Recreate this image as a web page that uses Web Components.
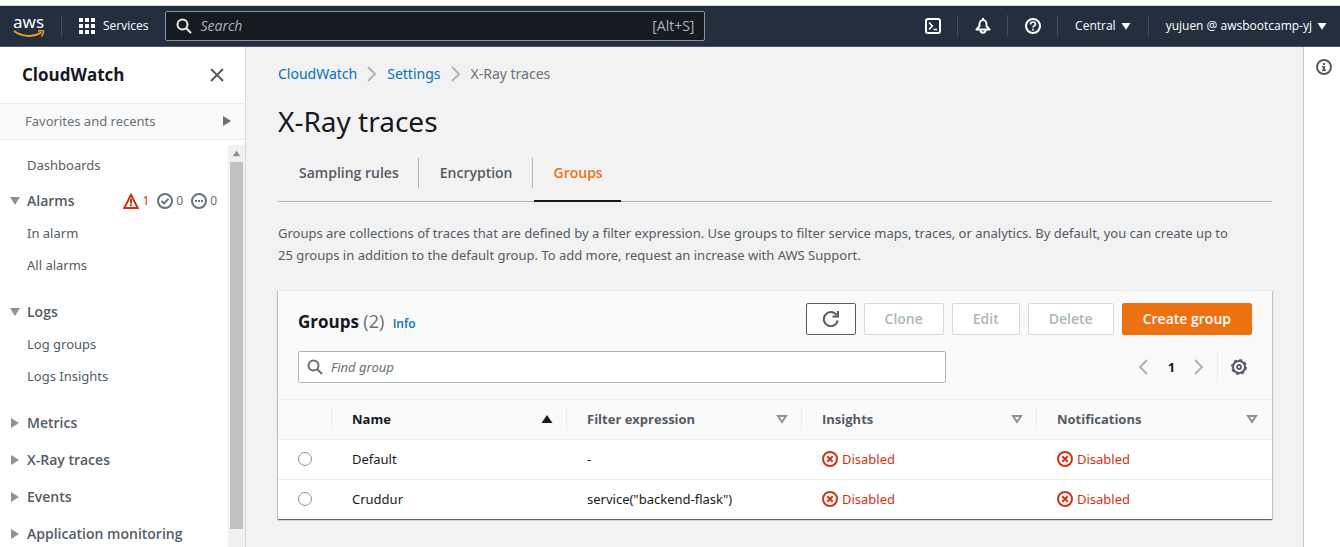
<!DOCTYPE html>
<html lang="en">
<head>
<meta charset="utf-8">
<title>CloudWatch - X-Ray traces</title>
<style>
  :root {
    --body: "Noto Sans", "Open Sans", sans-serif;
    --strong: "Open Sans", "Noto Sans", sans-serif;
    --ink: #16191f;
    --grey: #545b64;
    --soft: #687078;
    --line: #eaeded;
    --edge: #aab7b8;
    --link: #0073bb;
    --orange: #ec7211;
    --red: #d13212;
  }
  html, body { height: 100%; }
  body { margin: 0; overflow: hidden; font: 13px/22px var(--body); color: var(--grey); }
</style>
</head>
<body>
<cw-app>
  <cw-topbar slot="top"></cw-topbar>
  <cw-sidebar slot="nav"></cw-sidebar>
  <cw-breadcrumbs>
    <cw-crumb href="#cloudwatch">CloudWatch</cw-crumb>
    <cw-crumb href="#settings">Settings</cw-crumb>
    <cw-crumb>X-Ray traces</cw-crumb>
  </cw-breadcrumbs>
  <cw-heading>X-Ray traces</cw-heading>
  <cw-tabs></cw-tabs>
  <cw-text>Groups are collections of traces that are defined by a filter expression. Use groups to filter service maps, traces, or analytics. By default, you can create up to<br>25 groups in addition to the default group. To add more, request an increase with AWS Support.</cw-text>
  <cw-groups></cw-groups>
  <cw-tools slot="tools"></cw-tools>
</cw-app>
<script>
const S = 'fill="none" stroke="currentColor" stroke-width="2"';
const thin = w => `fill="none" stroke="currentColor" stroke-width="${w}"`;
const ICONS = {
  search: `<circle cx="6.5" cy="6.5" r="5" ${S}/><path d="M10.3 10.3 15 15" ${S}/>`,
  grid: [0, 6, 12].map(y => [0, 6, 12].map(x => `<rect x="${x}" y="${y}" width="4" height="4" fill="currentColor"/>`).join('')).join(''),
  shell: `<rect x="1" y="1" width="14" height="14" rx="2" ${S}/><path d="M4 4.5 7.3 8 4 11.5M8.5 11.5H12" ${thin(1.6)}/>`,
  bell: `<path d="M1.5 11.5h13L11.500 8V6.200C11.500 4 10 2 8 2S4.500 4 4.500 6.200V8z" ${S} stroke-linejoin="round"/><path d="M8 0v2M5.500 12c0 1.800 1 2.800 2.500 2.800s2.500-1 2.500-2.800" ${S}/>`,
  help: `<circle cx="8" cy="8" r="7" ${S}/><path d="M5.600 6.400C5.600 4.900 6.600 4 8 4s2.400.9 2.400 2.200C10.400 7.800 8 7.800 8 9.600M8 10.700v1.800" ${thin(1.7)}/>`,
  info: `<circle cx="8" cy="8" r="7" ${S}/><path d="M7 4h2v2H7zM6 7h3v3.500h1V12H6v-1.500h1v-2H6z" fill="currentColor"/>`,
  close: `<path d="M2 2l12 12M14 2 2 14" ${S}/>`,
  right: `<path d="M4 3v10L12 8z" fill="currentColor"/>`,
  down: `<path d="M3 4h10L8 12z" fill="currentColor"/>`,
  caret: `<path d="M2 4h12L8 13z" fill="currentColor"/>`,
  up: `<path d="M8 4 13.500 12h-11z" fill="currentColor"/>`,
  sort: `<path d="M4 5h8L8 11z" ${S}/>`,
  next: `<path d="M4 1l7 7-7 7" ${S}/>`,
  prev: `<path d="M11 1 4 8l7 7" ${S}/>`,
  alarm: `<path d="M8 1.800 14.800 15H1.200z" ${S}/><path d="M8 6v4.500M8 11.300v2" ${S}/>`,
  ok: `<circle cx="8" cy="8" r="7" ${S}/><path d="M4.500 8 7 10.400l4.500-4.500" ${S}/>`,
  pending: `<circle cx="8" cy="8" r="7" ${S}/><path d="M4 8h2M7 8h2M10 8h2" ${S}/>`,
  off: `<circle cx="8" cy="8" r="7" ${S}/><path d="M5.300 5.300l5.400 5.400M10.700 5.300l-5.400 5.400" ${S}/>`,
  refresh: `<path d="M14.700 9.500A7 7 0 1 1 13.500 4" ${S}/><path d="M15 0v5.500H9.500" ${S}/>`,
  gear: `<circle cx="8" cy="8" r="6" ${S}/><circle cx="8" cy="8" r="7.300" fill="none" stroke="currentColor" stroke-width="1.400" stroke-dasharray="3.230 2.500"/><circle cx="8" cy="8" r="2" ${thin(1.8)}/>`
};

const define = (name, css, html) => customElements.define(name, class extends HTMLElement {
  constructor() {
    super();
    const body = typeof html === 'function' ? html(this) : html;
    this.attachShadow({ mode: 'open' }).innerHTML =
      `<style>*{box-sizing:border-box}button,input{font:inherit;color:inherit;margin:0}button{background:none;border:0;padding:0;cursor:pointer}a{text-decoration:none}${css}</style>${body}`;
  }
});

define('cw-icon', `:host{display:inline-flex;flex:none;width:16px;height:16px}svg{display:block;width:100%;height:100%}`,
  el => `<svg viewBox="0 0 16 16" aria-hidden="true">${ICONS[el.getAttribute('name')]}</svg>`);

define('cw-app', `
  :host{display:grid;grid-template:auto 1fr / 246px 1fr 37px;height:100vh;background:#f2f2f2}
  .top{grid-column:1 / -1}
  .nav{min-height:0;background:#fff;border-right:1px solid #d5dbdb}
  main{padding:16px 31px 16px 32px;min-width:0}
  aside{background:#fff;border-left:1px solid #c4c8c9}`,
  `<div class="top"><slot name="top"></slot></div>
   <div class="nav"><slot name="nav"></slot></div>
   <main><slot></slot></main>
   <aside><slot name="tools"></slot></aside>`);

define('cw-topbar', `
  :host{display:block;background:#fff;padding-top:5px}
  header{display:flex;align-items:center;height:42px;background:#232f3e;color:#fff;border-top:1px solid #d5dbdb;border-bottom:1px solid #4b5563;font-size:12px;font-family:var(--strong)}
  .logo{display:block;width:61px;padding-left:13px;color:#fff;font:17px/16px var(--body)}
  .logo svg{display:block;width:32px;height:8px}
  .logo span{display:block}
  .sep{width:1px;height:22px;background:#414d5c}
  .services{display:flex;align-items:center;gap:8px;margin:0 17px}
  label{flex:0 1 540px;display:flex;align-items:center;height:30px;margin-right:auto;padding:0 10px;gap:8px;background:#161a21;border:1px solid #879596;border-radius:2px;font-size:14px;color:#aab7b8}
  label cw-icon{color:#eaeded}
  input{flex:1;min-width:0;background:none;border:0;padding:0;outline:0}
  input::placeholder{color:#aab7b8;font-style:italic;opacity:1}
  .tool{display:flex;justify-content:center;width:49px}
  .menu{display:flex;align-items:center;gap:4px;padding:0 16px 0 17px}
  .menu cw-icon{width:12px;height:12px}
  .menu:last-child{padding-right:12px}`,
  `<header>
    <a class="logo" href="#home"><span>aws</span><svg viewBox="0 0 32 8" fill="none" stroke="#f79b20" aria-hidden="true"><path d="M1 1C9 7 20 7.500 28.500 2.500" stroke-width="2"/><path d="M25 1.200c3-1 6-.8 5.500.2C30.500 3 30 4.500 28.500 6.500" stroke-width="1.500"/></svg></a>
    <span class="sep"></span>
    <button class="services"><cw-icon name="grid"></cw-icon>Services</button>
    <label><cw-icon name="search"></cw-icon><input type="search" placeholder="Search" aria-label="Search"><span>[Alt+S]</span></label>
    <button class="tool" aria-label="CloudShell"><cw-icon name="shell"></cw-icon></button><span class="sep"></span>
    <button class="tool" aria-label="Notifications"><cw-icon name="bell"></cw-icon></button><span class="sep"></span>
    <button class="tool" aria-label="Help"><cw-icon name="help"></cw-icon></button><span class="sep"></span>
    <button class="menu">Central<cw-icon name="caret"></cw-icon></button><span class="sep"></span>
    <button class="menu">yujuen @ awsbootcamp-yj<cw-icon name="caret"></cw-icon></button>
  </header>`);

define('cw-nav-item', `
  :host{display:block;padding:5px 0 5px 27px}
  a{color:var(--grey)}`,
  `<a href="#page"><slot></slot></a>`);

define('cw-nav-group', `
  :host{display:block;padding-bottom:5px}
  :host([open]){padding-bottom:15px}
  .head{display:flex;align-items:center;padding:5px 11px 5px 7px}
  button{display:flex;align-items:center;gap:4px;font:600 14px/22px var(--strong);color:var(--grey)}
  cw-icon{color:#879596}`,
  el => `<div class="head"><button aria-expanded="${el.hasAttribute('open')}"><cw-icon name="${el.hasAttribute('open') ? 'down' : 'right'}"></cw-icon>${el.getAttribute('label')}</button><slot name="status"></slot></div><slot></slot>`);

define('cw-alarm-counts', `
  :host{display:flex;margin-left:auto;gap:8px;font-size:12px;color:var(--soft)}
  span{display:flex;align-items:center;gap:3px}
  .red{color:var(--red)}`,
  `<span class="red"><cw-icon name="alarm"></cw-icon>1</span><span><cw-icon name="ok"></cw-icon>0</span><span><cw-icon name="pending"></cw-icon>0</span>`);

define('cw-sidebar', `
  :host{display:flex;flex-direction:column;height:100%;background:#fff}
  .title{display:flex;align-items:center;justify-content:space-between;height:56px;padding:0 20px 0 22px;color:var(--ink);font:700 17px/22px var(--strong)}
  h2{margin:0;font:inherit}
  .title button{display:flex;color:var(--grey)}
  .fav{display:flex;align-items:center;justify-content:space-between;height:37px;padding:0 10px 2px 25px;background:#fafafa;border:solid var(--line);border-width:1px 0;color:var(--soft)}
  .scroll{flex:1;min-height:0;display:flex}
  nav{flex:1;overflow:hidden;padding-top:9px}
  .dash{margin-bottom:4px}
  .bar{width:17px;margin-top:5px;padding-bottom:18px;background:#f1f1f1;display:flex;flex-direction:column;align-items:center}
  .bar cw-icon{width:11px;height:17px;color:#8f8f8f}
  .thumb{flex:1;width:13px;background:#c1c1c1}`,
  `<div class="title"><h2>CloudWatch</h2><button aria-label="Close navigation"><cw-icon name="close"></cw-icon></button></div>
   <button class="fav">Favorites and recents<cw-icon name="right"></cw-icon></button>
   <div class="scroll">
     <nav>
       <cw-nav-item class="dash">Dashboards</cw-nav-item>
       <cw-nav-group label="Alarms" open><cw-alarm-counts slot="status"></cw-alarm-counts>
         <cw-nav-item>In alarm</cw-nav-item><cw-nav-item>All alarms</cw-nav-item></cw-nav-group>
       <cw-nav-group label="Logs" open>
         <cw-nav-item>Log groups</cw-nav-item><cw-nav-item>Logs Insights</cw-nav-item></cw-nav-group>
       <cw-nav-group label="Metrics"></cw-nav-group>
       <cw-nav-group label="X-Ray traces"></cw-nav-group>
       <cw-nav-group label="Events"></cw-nav-group>
       <cw-nav-group label="Application monitoring"></cw-nav-group>
     </nav>
     <div class="bar"><cw-icon name="up"></cw-icon><div class="thumb"></div></div>
   </div>`);

define('cw-breadcrumbs', `:host{display:block}nav{display:flex}`, `<nav aria-label="Breadcrumbs"><slot></slot></nav>`);
define('cw-crumb', `
  :host{display:flex;align-items:center;font-size:14px;color:var(--soft)}
  a{color:var(--link)}
  cw-icon{margin:0 7px;color:var(--edge)}`,
  el => el.hasAttribute('href') ? `<a href="${el.getAttribute('href')}"><slot></slot></a><cw-icon name="next"></cw-icon>` : `<span aria-current="page"><slot></slot></span>`);

define('cw-heading', `:host{display:block;margin-top:18px}h1{margin:0;font:400 28px/36px var(--body);color:var(--ink)}`, `<h1><slot></slot></h1>`);

define('cw-tabs', `
  :host{display:block;margin-top:14px}
  div{display:flex;align-items:flex-start;height:49px;padding-top:5px;border-bottom:1px solid var(--edge)}
  button{position:relative;height:30px;padding:0 19px 0 21px;border-right:1px solid var(--edge);font:600 14px/30px var(--strong);color:var(--grey)}
  button:last-child{border-right:0;color:var(--orange)}
  button:last-child::after{content:"";position:absolute;left:1px;right:1px;bottom:-14px;height:2px;background:var(--ink)}`,
  `<div role="tablist"><button role="tab">Sampling rules</button><button role="tab">Encryption</button><button role="tab" aria-selected="true">Groups</button></div>`);

define('cw-text', `:host{display:block;margin-top:20px}p{margin:0}`, `<p><slot></slot></p>`);

define('cw-button', `
  :host{display:block}
  button{height:32px;padding:0 20px;border:1px solid #d5dbdb;border-radius:2px;background:#fff;color:var(--edge);font:600 14px/22px var(--strong)}
  :host([kind=icon]) button{display:flex;align-items:center;padding:0 16px;border-color:var(--grey);color:var(--grey)}
  :host([kind=primary]) button{background:var(--orange);border-color:var(--orange);color:#fff}`,
  el => `<button${el.hasAttribute('kind') ? '' : ' disabled'}${el.title ? ` aria-label="${el.title}"` : ''}><slot></slot></button>`);

define('cw-status', `:host{display:flex;align-items:center;gap:4px;color:var(--red)}`, `<cw-icon name="off"></cw-icon><slot></slot>`);

const headCell = (name, icon) => `<th scope="col"><div>${name}<cw-icon name="${icon}"></cw-icon></div></th>`;
const row = (name, filter) => `<tr><td><input type="radio" name="group" aria-label="${name}"></td><td>${name}</td><td>${filter}</td><td><cw-status>Disabled</cw-status></td><td><cw-status>Disabled</cw-status></td></tr>`;

define('cw-groups', `
  :host{display:block;margin-top:24px;background:#fff;border-top:1px solid var(--line);box-shadow:0 1px 1px rgba(0,28,36,.5),1px 1px 1px rgba(0,28,36,.15),-1px 1px 1px rgba(0,28,36,.15)}
  .head{padding:12px 20px 16px;background:#fafafa;border-bottom:1px solid var(--line)}
  .line,.actions,.pager{display:flex;align-items:center}
  .line{justify-content:space-between}
  .actions{gap:8px}
  h2{margin:0;padding-top:6px;font:700 17px/22px var(--strong);color:var(--ink)}
  h2 span{font-size:18px;font-weight:400;color:var(--soft)}
  h2 a{margin-left:4px;font-size:12px;font-weight:600;color:var(--link)}
  .find{margin-top:16px}
  label{display:flex;align-items:center;gap:8px;flex:0 1 648px;height:32px;padding:0 8px;background:#fff;border:1px solid var(--edge);border-radius:2px;color:var(--soft)}
  label input{flex:1;min-width:0;border:0;padding:0;outline:0;background:none;font-size:13px}
  input::placeholder{color:var(--soft);font-style:italic;opacity:1}
  .pager{color:var(--edge)}
  .pager button{display:flex}
  .pager b{width:39px;text-align:center;color:var(--ink);font:700 13px/22px var(--strong)}
  .prefs{align-items:center;height:32px;margin-left:10px;padding:0 5px 0 13px;border-left:1px solid var(--line);color:var(--grey)}
  table{width:100%;table-layout:fixed;border-collapse:collapse}
  th{height:39px;padding:0;background:#fafafa;border-bottom:1px solid var(--line);font:700 13px/22px var(--strong);color:var(--grey);text-align:left}
  th:first-child{width:54px}
  th div{display:flex;align-items:center;justify-content:space-between;padding:0 11px 0 20px;border-right:1px solid var(--line)}
  th:first-child div{height:22px}
  th:last-child div{padding-right:12px;border-right:0}
  th cw-icon{color:#879596}
  th:nth-child(2),th:nth-child(2) cw-icon{color:var(--ink)}
  td{height:40px;padding:0 20px;color:var(--ink)}
  tr+tr td{border-top:1px solid var(--line)}
  td input{display:block;appearance:none;width:14px;height:14px;border:1px solid #879596;border-radius:50%;background:#fff}`,
  `<div class="head">
     <div class="line">
       <h2>Groups <span>(2)</span> <a href="#info">Info</a></h2>
       <div class="actions">
         <cw-button kind="icon" title="Refresh"><cw-icon name="refresh"></cw-icon></cw-button>
         <cw-button>Clone</cw-button><cw-button>Edit</cw-button><cw-button>Delete</cw-button>
         <cw-button kind="primary">Create group</cw-button>
       </div>
     </div>
     <div class="line find">
       <label><cw-icon name="search"></cw-icon><input type="search" placeholder="Find group" aria-label="Find group"></label>
       <div class="pager">
         <button aria-label="Previous page"><cw-icon name="prev"></cw-icon></button><b>1</b><button aria-label="Next page"><cw-icon name="next"></cw-icon></button>
         <button class="prefs" aria-label="Preferences"><cw-icon name="gear"></cw-icon></button>
       </div>
     </div>
   </div>
   <table>
     <thead><tr><th><div></div></th>${headCell('Name', 'up')}${headCell('Filter expression', 'sort')}${headCell('Insights', 'sort')}${headCell('Notifications', 'sort')}</tr></thead>
     <tbody>${row('Default', '-')}${row('Cruddur', 'service("backend-flask")')}</tbody>
   </table>`);

define('cw-tools', `:host{display:flex;justify-content:center;padding:12px 0 0 3px;color:var(--grey)}button{display:flex}`,
  `<button aria-label="Open help panel"><cw-icon name="info"></cw-icon></button>`);
</script>
</body>
</html>
